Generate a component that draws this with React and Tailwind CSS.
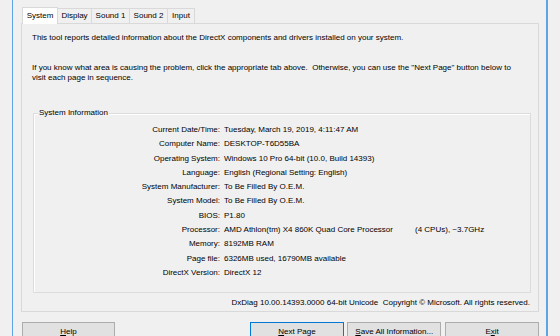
import React from 'react';

const rows = [
  ['Current Date/Time:', 'Tuesday, March 19, 2019, 4:11:47 AM'],
  ['Computer Name:', 'DESKTOP-T6D55BA'],
  ['Operating System:', 'Windows 10 Pro 64-bit (10.0, Build 14393)'],
  ['Language:', 'English (Regional Setting: English)'],
  ['System Manufacturer:', 'To Be Filled By O.E.M.'],
  ['System Model:', 'To Be Filled By O.E.M.'],
  ['BIOS:', 'P1.80'],
  ['Processor:', 'cpu'],
  ['Memory:', '8192MB RAM'],
  ['Page file:', '6326MB used, 16790MB available'],
  ['DirectX Version:', 'DirectX 12'],
];

const tabs = [
  ['System', 'w-[36px]'],
  ['Display', 'w-[34px]'],
  ['Sound 1', 'w-[38px]'],
  ['Sound 2', 'w-[38px]'],
  ['Input', 'w-[27px]'],
];

function Button({ children, focused, w }) {
  return (
    <div
      className={`h-[20px] ${w} flex items-center justify-center bg-[#e1e1e1] border ${
        focused ? 'border-[#0078d7]' : 'border-[#adadad]'
      }`}
    >
      {children}
    </div>
  );
}

export default function App() {
  return (
    <div
      className="w-[560px] h-[336px] overflow-hidden bg-[#f0f0f0] flex text-[8px] text-black"
      style={{ fontFamily: '"Liberation Sans", Arial, sans-serif' }}
    >
      <div className="w-[12px] shrink-0" />
      <div className="w-[1px] shrink-0 bg-[#5ea3e6]" />
      <div className="w-[533px] shrink-0 pt-[8px] pl-[8px] pr-[7px]">
        {/* tabs */}
        <div className="flex items-end h-[15px] pl-[1px]">
          {tabs.map(([t, w], i) => (
            <div
              key={t}
              className={
                i === 0
                  ? `h-[17px] -mb-[1px] ${w} flex items-center justify-center bg-[#ffffff] border border-b-0 border-[#d9d9d9] relative z-10`
                  : `h-[15px] ${w} flex items-center justify-center border border-l-0 border-b-0 border-[#d9d9d9]`
              }
            >
              {t}
            </div>
          ))}
        </div>
        {/* panel */}
        <div className="h-[289px] border border-[#d9d9d9] bg-[#f0f0f0] flex flex-col pt-[9px] pl-[10px] pr-[7px]">
          <p className="leading-[10px]">
            This tool reports detailed information about the DirectX components and drivers installed on your system.
          </p>
          <p className="leading-[10px] mt-[20px] w-[490px]">
            If you know what area is causing the problem, click the appropriate tab above.&nbsp; Otherwise, you can use the "Next Page" button below to visit each page in sequence.
          </p>
          {/* group box */}
          <div className="mt-[30px] ml-[1px] h-[180px] shrink-0 border border-[#dcdcdc] shadow-[inset_1px_1px_0_#ffffff] relative pt-[9px]">
            <span className="absolute -top-[6px] left-[4px] px-[1px] bg-[#f0f0f0] leading-[10px]">
              System Information
            </span>
            {rows.map(([k, v]) => (
              <div key={k} className="flex leading-[14.3px] h-[14.3px]">
                <div className="w-[186px] text-right">{k}</div>
                <div className="pl-[4px] whitespace-nowrap">
                  {v === 'cpu' ? (
                    <span className="flex">
                      <span className="w-[191px]">AMD Athlon(tm) X4 860K Quad Core Processor</span>
                      <span>(4 CPUs), ~3.7GHz</span>
                    </span>
                  ) : (
                    v
                  )}
                </div>
              </div>
            ))}
          </div>
          <div className="mt-[5px] text-right pr-[1px] leading-[10px] whitespace-nowrap">
            DxDiag 10.00.14393.0000 64-bit Unicode&nbsp; Copyright © Microsoft. All rights reserved.
          </div>
        </div>
        {/* buttons */}
        <div className="flex mt-[10px] pl-[1px]">
          <Button w="w-[93px]">
            <span><u>H</u>elp</span>
          </Button>
          <div className="w-[135px]" />
          <Button w="w-[95px]" focused>
            <span><u>N</u>ext Page</span>
          </Button>
          <div className="w-[3px]" />
          <Button w="w-[94px]">
            <span><u>S</u>ave All Information...</span>
          </Button>
          <div className="w-[4px]" />
          <Button w="w-[94px]">
            <span>E<u>x</u>it</span>
          </Button>
        </div>
      </div>
      <div className="w-[2px] shrink-0 bg-[#5ea3e6]" />
      <div className="flex-1" />
    </div>
  );
}
